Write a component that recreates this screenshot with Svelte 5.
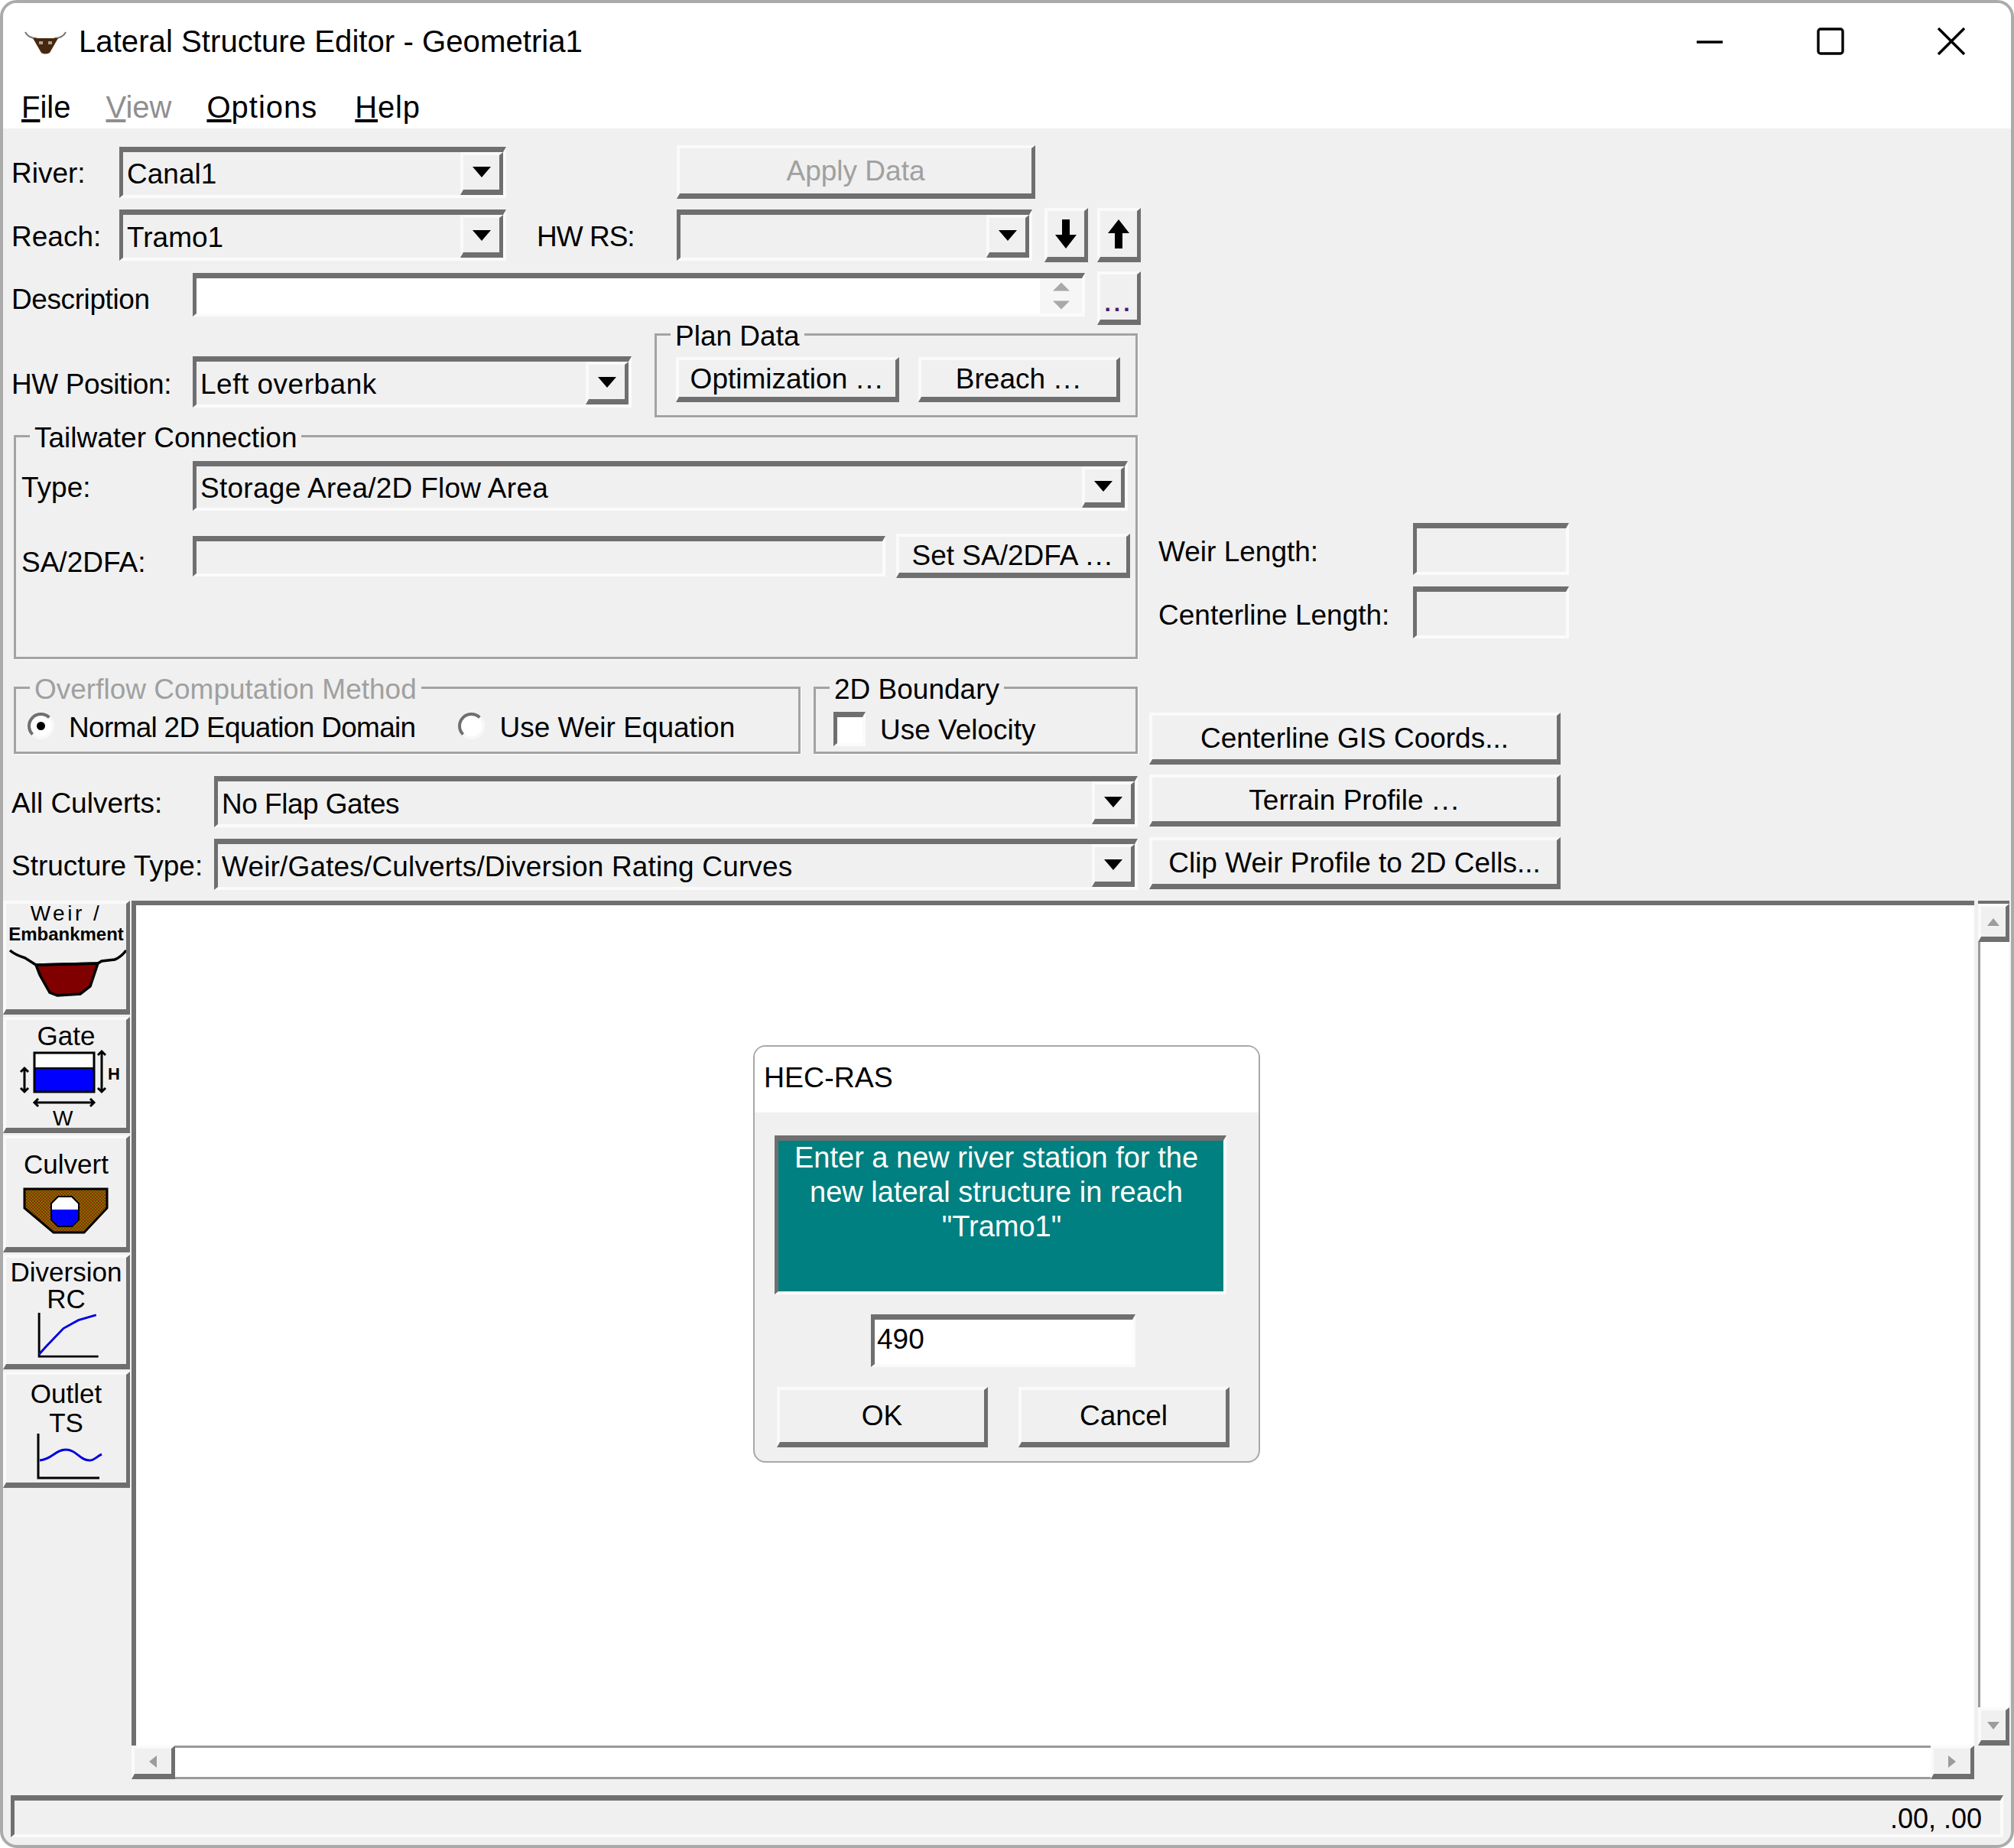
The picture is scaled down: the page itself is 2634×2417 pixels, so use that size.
<script lang="ts">
  let velocity = $state(false);
  let method = $state("normal");
</script>

{#snippet caret()}
  <svg class="caret" viewBox="0 0 24 14"><path d="M0 0H24L12 14Z" /></svg>
{/snippet}

{#snippet combo(value: string, cls: string)}
  <div class="combo sunken {cls}">
    <span class="combo-value">{value}</span>
    <span class="drop raised">{@render caret()}</span>
  </div>
{/snippet}

<div class="window">
  <header class="titlebar">
    <svg class="app-icon" viewBox="0 0 55 30">
      <path d="M1 1C4 7 9 9 16 9M54 1C51 7 46 9 39 9" fill="none" stroke="#777" stroke-width="2" />
      <path d="M11 9H44L33 28Q27 31 22 28Z" fill="#47280f" />
      <rect x="19" y="13" width="5" height="4" fill="#a8a29a" />
      <rect x="31" y="13" width="5" height="4" fill="#a8a29a" />
    </svg>
    <span class="title">Lateral Structure Editor - Geometria1</span>
    <div class="controls">
      <svg class="ctl ctl-min" viewBox="0 0 36 36"><path d="M1 19H35" /></svg>
      <svg class="ctl ctl-max" viewBox="0 0 36 36"><rect x="2" y="2" width="32" height="32" rx="3" /></svg>
      <svg class="ctl ctl-close" viewBox="0 0 36 36"><path d="M1 1L35 35M35 1L1 35" /></svg>
    </div>
  </header>

  <nav class="menubar">
    <span class="m-file"><u>F</u>ile</span>
    <span class="m-view"><u>V</u>iew</span>
    <span class="m-options"><u>O</u>ptions</span>
    <span class="m-help"><u>H</u>elp</span>
  </nav>

  <main class="body">
    <section class="form">
      <div class="left">
        <div class="row r1">
          <span class="lab lab-a">River:</span>
          {@render combo("Canal1", "w-reach")}
          <button class="btn raised apply" disabled>Apply Data</button>
        </div>
        <div class="row r2">
          <span class="lab lab-a">Reach:</span>
          {@render combo("Tramo1", "w-reach")}
          <span class="lab lab-hw">HW RS:</span>
          {@render combo("", "w-hw")}
          <button class="btn raised arrow a-down" aria-label="Next">
            <svg viewBox="0 0 28 38"><path d="M9 0H19V20H28L14 38L0 20H9Z" /></svg>
          </button>
          <button class="btn raised arrow a-up" aria-label="Previous">
            <svg viewBox="0 0 28 38"><path d="M9 38H19V18H28L14 0L0 18H9Z" /></svg>
          </button>
        </div>
        <div class="row r3">
          <span class="lab lab-b">Description</span>
          <div class="sunken desc">
            <span class="spin">
              <svg viewBox="0 0 24 12"><path d="M0 12H24L12 0Z" /></svg>
              <svg viewBox="0 0 24 12"><path d="M0 0H24L12 12Z" /></svg>
            </span>
          </div>
          <button class="btn raised dots">...</button>
        </div>
        <div class="row r4">
          <span class="lab lab-b hw-lab">HW Position:</span>
          {@render combo("Left overbank", "w-pos")}
          <div class="group plan">
            <span class="legend">Plan Data</span>
            <button class="btn raised opt">Optimization <span class="ell">...</span></button>
            <button class="btn raised breach">Breach <span class="ell">...</span></button>
          </div>
        </div>

        <div class="group tail">
          <span class="legend">Tailwater Connection</span>
          <div class="row">
            <span class="lab lab-t">Type:</span>
            {@render combo("Storage Area/2D Flow Area", "w-type")}
          </div>
          <div class="row sa">
            <span class="lab lab-t sa-lab">SA/2DFA:</span>
            <div class="sunken sa-field"></div>
            <button class="btn raised set-sa">Set SA/2DFA <span class="ell">...</span></button>
          </div>
        </div>

        <div class="row r-method">
          <div class="group overflow">
            <span class="legend off">Overflow Computation Method</span>
            <button class="radio-row" onclick={() => (method = "normal")}>
              <span class="radio" class:on={method === "normal"}></span>
              <span class="tight">Normal 2D Equation Domain</span>
            </button>
            <button class="radio-row weir" onclick={() => (method = "weir")}>
              <span class="radio" class:on={method === "weir"}></span>
              <span>Use Weir Equation</span>
            </button>
          </div>
          <div class="group boundary">
            <span class="legend">2D Boundary</span>
            <button class="radio-row" onclick={() => (velocity = !velocity)}>
              <span class="check sunken">{velocity ? "✓" : ""}</span>
              <span>Use Velocity</span>
            </button>
          </div>
        </div>

        <div class="row r-culv">
          <span class="lab lab-c">All Culverts:</span>
          {@render combo("No Flap Gates", "w-culv w-noflap")}
        </div>
        <div class="row r-struct">
          <span class="lab lab-c">Structure Type:</span>
          {@render combo("Weir/Gates/Culverts/Diversion Rating Curves", "w-culv w-struct")}
        </div>
      </div>

      <div class="right">
        <div class="row len first">
          <span class="lab lab-len">Weir Length:</span>
          <div class="sunken len-field"></div>
        </div>
        <div class="row len second">
          <span class="lab lab-len">Centerline Length:</span>
          <div class="sunken len-field"></div>
        </div>
        <button class="btn raised side gis">Centerline GIS Coords...</button>
        <button class="btn raised side terrain">Terrain Profile <span class="ell">...</span></button>
        <button class="btn raised side clip">Clip Weir Profile to 2D Cells...</button>
      </div>
    </section>

    <section class="work">
      <aside class="tools">
        <button class="tool raised t-weir">
          <span class="t-small">Weir /</span>
          <span class="t-bold">Embankment</span>
          <svg viewBox="0 0 157 72" class="weir-ico">
            <path d="M39 26L120 24L110 54L97 64L67 66L57 62L44 39Z" fill="#800000" stroke="#000" stroke-width="3.5" />
            <path d="M5 7Q12 13 25 17L39 26L120 24L125 21L142 19Q150 16 157 7" fill="none" stroke="#000" stroke-width="3.5" />
          </svg>
        </button>
        <button class="tool raised t-gate">
          <span class="t-label">Gate</span>
          <svg viewBox="0 0 157 105" class="gate-ico">
            <rect x="37" y="5" width="78" height="20" fill="#fff" />
            <rect x="37" y="25" width="78" height="31" fill="#00f" />
            <rect x="37" y="5" width="78" height="51" fill="none" stroke="#000" stroke-width="3" />
            <path d="M37 25H115" stroke="#000" stroke-width="2" />
            <path d="M24 25V56M19 30L24 25L29 30M19 51L24 56L29 51M125 3V56M120 8L125 3L130 8M120 51L125 56L130 51M37 70H115M42 65L37 70L42 75M110 65L115 70L110 75" fill="none" stroke="#000" stroke-width="3" />
            <text x="133" y="40" class="svg-h">H</text>
            <text x="61" y="100" class="svg-w">W</text>
          </svg>
        </button>
        <button class="tool raised t-culvert">
          <span class="t-label">Culvert</span>
          <svg viewBox="0 0 157 78" class="culv-ico">
            <defs>
              <pattern id="dirt" width="4" height="4" patternUnits="userSpaceOnUse">
                <rect width="4" height="4" fill="#8a3000" />
                <rect width="2" height="2" fill="#807000" />
                <rect x="2" y="2" width="2" height="2" fill="#807000" />
              </pattern>
            </defs>
            <path d="M24 15V40L62 72H102L132 40V15Z" fill="url(#dirt)" stroke="#000" stroke-width="3" />
            <path d="M68 25H86L95 34V55L86 64H68L59 55V34Z" fill="#fff" stroke="#000" stroke-width="2" />
            <path d="M60 42H94V55L86 63H68L60 55Z" fill="#00f" />
          </svg>
        </button>
        <button class="tool raised t-div">
          <span class="t-label">Diversion</span>
          <span class="t-label">RC</span>
          <svg viewBox="0 0 157 64" class="chart-ico">
            <path d="M42 1V60H122" fill="none" stroke="#000" stroke-width="3" />
            <path d="M42 57L52 46L75 22L95 11L119 4" fill="none" stroke="#0000e0" stroke-width="3" />
          </svg>
        </button>
        <button class="tool raised t-outlet">
          <span class="t-label">Outlet</span>
          <span class="t-label ts">TS</span>
          <svg viewBox="0 0 157 62" class="chart-ico">
            <path d="M42 0V58H122" fill="none" stroke="#000" stroke-width="3" />
            <path d="M44 35C60 34 64 21 78 21C92 21 96 35 109 35C116 35 118 30 125 27" fill="none" stroke="#0000e0" stroke-width="3" />
          </svg>
        </button>
      </aside>

      <div class="view">
        <div class="view-top">
          <div class="canvas"></div>
          <div class="vbar">
            <span class="sb-btn raised v-end">
              <svg viewBox="0 0 16 10"><path d="M0 10H16L8 0Z" /></svg>
            </span>
            <span class="v-track"></span>
            <span class="sb-btn raised v-end">
              <svg viewBox="0 0 16 10"><path d="M0 0H16L8 10Z" /></svg>
            </span>
          </div>
        </div>
        <div class="hbar">
          <span class="sb-btn raised h-end">
            <svg viewBox="0 0 10 16"><path d="M10 0V16L0 8Z" /></svg>
          </span>
          <span class="h-track"></span>
          <span class="sb-btn raised h-end">
            <svg viewBox="0 0 10 16"><path d="M0 0V16L10 8Z" /></svg>
          </span>
        </div>
      </div>
    </section>

    <footer class="status sunken">.00, .00</footer>
  </main>

  <div class="dialog">
    <div class="dlg-title">HEC-RAS</div>
    <div class="dlg-body">
      <div class="prompt sunken">
        Enter a new river station for the<br />
        new lateral structure in reach<br />
        <span class="reach-name">"Tramo1"</span>
      </div>
      <div class="sunken dlg-input">490</div>
      <div class="dlg-actions">
        <button class="btn raised dlg-btn">OK</button>
        <button class="btn raised dlg-btn">Cancel</button>
      </div>
    </div>
  </div>
</div>

<style>
  :global(body) {
    background: #fff;
  }

  .window {
    position: relative;
    box-sizing: border-box;
    width: 2634px;
    height: 2417px;
    display: flex;
    flex-direction: column;
    border: 4px solid #ababab;
    border-radius: 22px;
    overflow: hidden;
    background: #f0f0f0;
    font-family: "Liberation Sans", Arial, sans-serif;
    font-size: 37px;
    color: #000;
  }

  button {
    font: inherit;
    color: inherit;
    padding: 0;
    background: #f0f0f0;
  }

  .raised {
    box-sizing: border-box;
    background: #f0f0f0;
    border-style: solid;
    border-width: 4px 5px 7px 4px;
    border-color: #fafafa #6f6f6f #6f6f6f #fafafa;
  }

  .sunken {
    box-sizing: border-box;
    background: #f0f0f0;
    border-style: solid;
    border-width: 7px 4px 4px 5px;
    border-color: #6f6f6f #fbfbfb #fbfbfb #6f6f6f;
  }

  .ell {
    letter-spacing: 2px;
    margin-left: 1px;
  }

  /* title + menu */
  .titlebar {
    height: 106px;
    flex-shrink: 0;
    display: flex;
    align-items: center;
    background: #fff;
    padding-left: 28px;
  }

  .app-icon {
    width: 55px;
    height: 30px;
    margin-top: -2px;
  }

  .title {
    font-size: 40.2px;
    margin-left: 16px;
    margin-top: -4px;
  }

  .controls {
    margin-left: auto;
    display: flex;
    align-items: center;
    margin-right: 60px;
    margin-top: -6px;
    gap: 122px;
  }

  .ctl {
    width: 36px;
    height: 36px;
    fill: none;
    stroke: #000;
    stroke-width: 3.4;
  }

  .menubar {
    height: 58px;
    flex-shrink: 0;
    box-sizing: border-box;
    display: flex;
    gap: 49px;
    padding-left: 24px;
    padding-top: 8px;
    background: #fff;
    font-size: 40px;
  }

  .m-view {
    color: #8f8f8f;
    margin-left: -3px;
    margin-right: -3px;
  }

  .m-options {
    letter-spacing: 1px;
  }

  .m-help {
    letter-spacing: 0.8px;
  }

  /* form */
  .body {
    flex: 1;
    display: flex;
    flex-direction: column;
    min-height: 0;
  }

  .form {
    display: flex;
    padding: 22px 0 0 11px;
    height: 997px;
    box-sizing: border-box;
    flex-shrink: 0;
  }

  .left {
    width: 1477px;
    flex-shrink: 0;
  }

  .row {
    display: flex;
    align-items: center;
  }

  .r1 {
    height: 70px;
  }

  .r2 {
    height: 71px;
    margin-top: 12px;
  }

  .r3 {
    height: 70px;
    margin-top: 12px;
  }

  .r4 {
    height: 110px;
    margin-top: 11px;
    align-items: flex-start;
  }

  .lab {
    flex-shrink: 0;
    white-space: nowrap;
    padding-top: 4px;
  }

  .lab-a {
    width: 141px;
  }

  .lab-b {
    width: 237px;
    letter-spacing: -0.4px;
  }

  .lab-c {
    width: 265px;
  }

  .lab-t {
    width: 224px;
  }

  .sa-lab {
    padding-top: 18px;
  }

  .lab-hw {
    width: 183px;
    margin-left: 40px;
    letter-spacing: -1px;
  }

  .combo {
    display: flex;
    align-items: center;
    height: 67px;
    flex-shrink: 0;
  }

  .combo-value {
    flex: 1;
    padding: 3px 0 0 5px;
    white-space: nowrap;
  }

  .drop {
    width: 56px;
    height: 100%;
    display: flex;
    align-items: center;
    justify-content: center;
    flex-shrink: 0;
  }

  .caret {
    width: 24px;
    height: 14px;
    fill: #000;
  }

  .w-reach {
    width: 506px;
  }

  .w-hw {
    width: 465px;
  }

  .w-pos {
    width: 574px;
    margin-top: 30px;
    letter-spacing: 0.5px;
  }

  .w-type {
    width: 1223px;
    height: 65px;
    letter-spacing: 0.27px;
  }

  .w-culv {
    width: 1208px;
  }

  .w-noflap {
    letter-spacing: -0.5px;
  }

  .w-struct {
    letter-spacing: 0.16px;
  }

  .btn {
    display: flex;
    align-items: center;
    justify-content: center;
    flex-shrink: 0;
    white-space: pre;
  }

  .apply {
    width: 469px;
    height: 70px;
    margin-left: 223px;
    color: #a0a0a0;
  }

  .arrow {
    width: 57px;
    height: 71px;
    margin-left: 16px;
  }

  .a-up {
    margin-left: 12px;
  }

  .arrow svg {
    width: 28px;
    height: 38px;
    fill: #000;
  }

  .desc {
    width: 1167px;
    height: 57px;
    background: #fff;
    display: flex;
    justify-content: flex-end;
    align-self: flex-start;
    margin-top: 2px;
  }

  .spin {
    width: 55px;
    background: #f6f6f6;
    display: flex;
    flex-direction: column;
    align-items: center;
    justify-content: center;
    gap: 12px;
  }

  .spin svg {
    width: 22px;
    height: 12px;
    fill: #a8a8a8;
  }

  .dots {
    width: 57px;
    height: 70px;
    margin-left: 16px;
    align-items: flex-end;
    color: #4a1a70;
    line-height: 1;
    font-weight: 700;
    font-size: 30px;
    padding-bottom: 6px;
    letter-spacing: 4px;
  }

  .hw-lab {
    margin-top: 42px;
  }

  .group {
    position: relative;
    box-sizing: border-box;
    border: 3px solid #a3a3a3;
    box-shadow: 1px 1px 0 #fff;
  }

  .legend {
    position: absolute;
    top: -20px;
    left: 18px;
    padding: 0 6px;
    line-height: 42px;
    background: #f0f0f0;
    white-space: nowrap;
  }

  .legend.off {
    color: #a0a0a0;
  }

  .plan {
    width: 632px;
    height: 110px;
    margin-left: 30px;
    display: flex;
    gap: 25px;
    padding: 28px 0 0 25px;
  }

  .opt {
    width: 292px;
    height: 59px;
    padding-top: 2px;
  }

  .breach {
    width: 264px;
    height: 59px;
    padding-top: 2px;
  }

  .tail {
    width: 1470px;
    height: 293px;
    margin-top: 23px;
    margin-left: 3px;
    padding: 31px 0 0 7px;
  }

  .sa {
    margin-top: 29px;
  }

  .sa-field {
    width: 906px;
    height: 53px;
  }

  .set-sa {
    width: 306px;
    height: 58px;
    margin-left: 14px;
    padding-top: 2px;
  }

  .r-method {
    margin-top: 36px;
    margin-left: 3px;
    gap: 17px;
    align-items: stretch;
    height: 88px;
  }

  .overflow {
    width: 1029px;
    display: flex;
    align-items: center;
    padding: 20px 0 0 15px;
  }

  .boundary {
    width: 424px;
    display: flex;
    align-items: center;
    padding: 26px 0 0 23px;
  }

  .radio-row {
    display: flex;
    align-items: center;
    border: 0;
    background: none;
    gap: 19px;
    white-space: nowrap;
  }

  .tight {
    letter-spacing: -0.7px;
  }

  .radio-row.weir {
    margin-left: 56px;
  }

  .radio {
    position: relative;
    box-sizing: border-box;
    width: 35px;
    height: 35px;
    border-radius: 50%;
    background: #fff;
    border: 4px solid;
    border-color: #6f6f6f #f8f8f8 #f8f8f8 #6f6f6f;
    margin-top: -6px;
  }

  .radio.on::after {
    content: "";
    position: absolute;
    left: 8px;
    top: 8px;
    width: 11px;
    height: 11px;
    border-radius: 50%;
    background: #000;
  }

  .check {
    width: 42px;
    height: 45px;
    background: #fff;
    margin-top: -4px;
  }

  .r-culv {
    height: 67px;
    margin-top: 29px;
  }

  .r-struct {
    height: 67px;
    margin-top: 15px;
  }

  /* right column */
  .right {
    width: 560px;
    padding-left: 11px;
    box-sizing: border-box;
    display: flex;
    flex-direction: column;
  }

  .len {
    height: 68px;
    padding-left: 12px;
  }

  .len.first {
    margin-top: 494px;
  }

  .len.second {
    margin-top: 15px;
  }

  .lab-len {
    width: 333px;
    padding-top: 8px;
  }

  .len-field {
    width: 206px;
    height: 68px;
  }

  .side {
    width: 538px;
    height: 68px;
    padding-top: 3px;
  }

  .gis {
    margin-top: 97px;
  }

  .terrain {
    margin-top: 13px;
  }

  .clip {
    margin-top: 14px;
  }

  /* lower area */
  .work {
    display: flex;
    height: 1149px;
    flex-shrink: 0;
    margin-top: 13px;
  }

  .tools {
    width: 168px;
    flex-shrink: 0;
    display: flex;
    flex-direction: column;
    gap: 3px;
  }

  .tool {
    width: 166px;
    display: flex;
    flex-direction: column;
    align-items: center;
    overflow: hidden;
    flex-shrink: 0;
  }

  .tool svg {
    width: 157px;
    flex-shrink: 0;
    overflow: visible;
  }

  .t-weir {
    height: 149px;
  }

  .t-gate {
    height: 152px;
    padding-top: 2px;
  }

  .t-culvert {
    height: 153px;
    padding-top: 16px;
  }

  .t-div {
    height: 150px;
    padding-top: 1px;
  }

  .t-outlet {
    height: 152px;
    padding-top: 7px;
  }

  .t-label {
    font-size: 35px;
    line-height: 35px;
    height: 35px;
  }

  .t-gate .t-label {
    line-height: 38px;
    height: 36px;
  }

  .ts {
    height: 32px;
    padding-top: 3px;
  }

  .t-small {
    font-size: 28px;
    line-height: 26px;
    height: 26px;
    letter-spacing: 3.5px;
  }

  .t-bold {
    font-size: 24px;
    font-weight: 700;
    line-height: 28px;
    height: 28px;
    white-space: nowrap;
  }

  .weir-ico {
    height: 72px;
  }

  .gate-ico {
    height: 105px;
  }

  .culv-ico {
    height: 78px;
  }

  .chart-ico {
    height: 62px;
  }

  .svg-h {
    font-size: 22px;
    font-weight: 700;
    font-family: "Liberation Sans", sans-serif;
  }

  .svg-w {
    font-size: 28px;
    font-family: "Liberation Sans", sans-serif;
  }

  .view {
    flex: 1;
    display: flex;
    flex-direction: column;
    min-width: 0;
  }

  .view-top {
    flex: 1;
    display: flex;
    min-height: 0;
  }

  .canvas {
    width: 2410px;
    box-sizing: border-box;
    flex-shrink: 0;
    background: #fff;
    border-style: solid;
    border-width: 6px 0 0 6px;
    border-color: #6f6f6f;
  }

  .vbar {
    width: 41px;
    margin-left: 5px;
    display: flex;
    flex-direction: column;
    border-top: 4px solid #6f6f6f;
    background: #fff;
  }

  .v-track {
    flex: 1;
    background: #fff;
    border-left: 3px solid #9a9a9a;
  }

  .sb-btn {
    display: flex;
    align-items: center;
    justify-content: center;
    flex-shrink: 0;
  }

  .sb-btn svg {
    fill: #9c9c9c;
  }

  .v-end {
    height: 50px;
  }

  .v-end svg {
    width: 16px;
    height: 10px;
  }

  .hbar {
    width: 2410px;
    height: 44px;
    display: flex;
    flex-shrink: 0;
  }

  .h-end {
    width: 57px;
  }

  .h-end svg {
    width: 10px;
    height: 16px;
  }

  .h-track {
    flex: 1;
    background: #fff;
    border-top: 3px solid #9a9a9a;
    border-bottom: 3px solid #9a9a9a;
  }

  .status {
    width: 2606px;
    height: 55px;
    margin: 21px 0 0 10px;
    flex-shrink: 0;
    text-align: right;
    padding-right: 24px;
    line-height: 48px;
    font-size: 36px;
  }

  /* modal over the canvas */
  .dialog {
    position: absolute;
    left: 981px;
    top: 1363px;
    width: 663px;
    height: 546px;
    box-sizing: border-box;
    display: flex;
    flex-direction: column;
    border: 2px solid #a8a8a8;
    border-radius: 16px;
    overflow: hidden;
    background: #f0f0f0;
  }

  .dlg-title {
    height: 86px;
    box-sizing: border-box;
    background: #fff;
    padding: 19px 0 0 12px;
    font-size: 37.5px;
    line-height: 42px;
  }

  .dlg-body {
    display: flex;
    flex-direction: column;
    align-items: center;
    padding-top: 30px;
  }

  .prompt {
    width: 591px;
    height: 208px;
    background: #008080;
    color: #fff;
    text-align: center;
    line-height: 45px;
    margin-left: -16px;
    padding-right: 12px;
    font-size: 38px;
  }

  .reach-name {
    padding-left: 14px;
  }

  .dlg-input {
    width: 346px;
    height: 69px;
    margin: 26px 0 0 -9px;
    background: #fff;
    line-height: 52px;
    padding-left: 3px;
  }

  .dlg-actions {
    display: flex;
    gap: 40px;
    margin: 26px 0 0 -9px;
  }

  .dlg-btn {
    width: 276px;
    height: 79px;
  }
</style>
